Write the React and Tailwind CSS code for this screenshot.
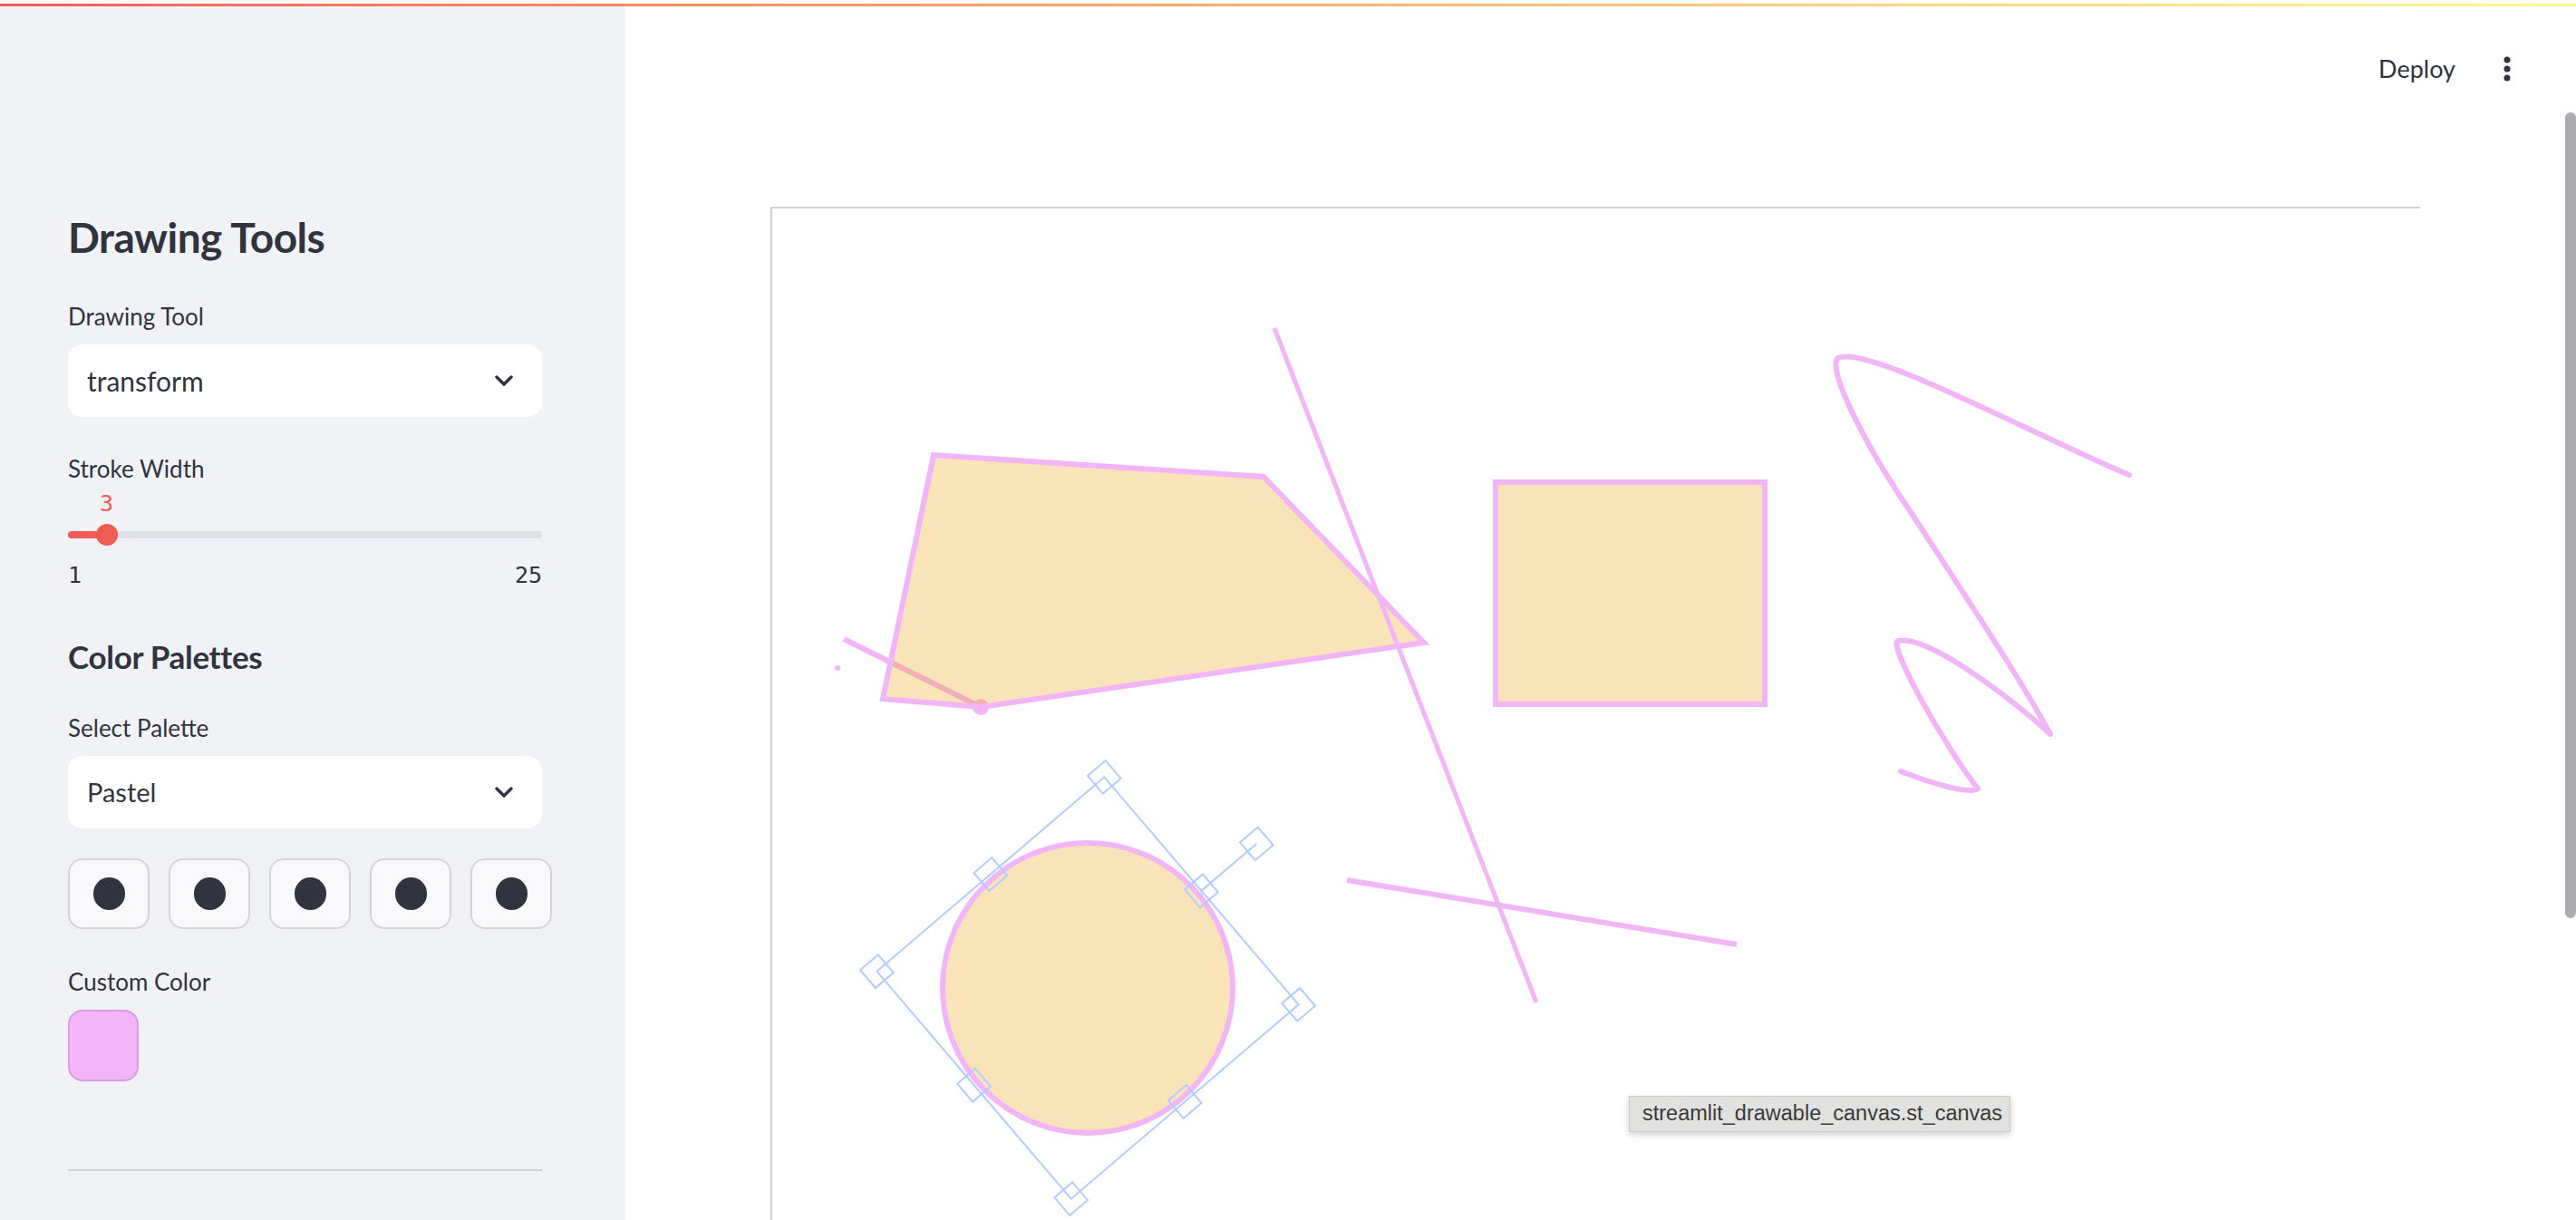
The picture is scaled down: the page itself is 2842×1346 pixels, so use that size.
import React from 'react'

const PINK = '#f2b5f8'
const FILL = 'rgba(235,165,25,0.3)'

function Chevron() {
  return (
    <svg width="20" height="13" viewBox="0 0 20 13" className="shrink-0">
      <path d="M2 2 L10 10 L18 2" fill="none" stroke="#31333f" strokeWidth="3.4" strokeLinecap="round" strokeLinejoin="round" />
    </svg>
  )
}

function Select({ value, textSize }) {
  return (
    <div className="flex h-[80px] w-[523px] items-center justify-between rounded-[16px] bg-white pl-[21px] pr-[32px]">
      <span className={textSize}>{value}</span>
      <Chevron />
    </div>
  )
}

function Label({ children, className = '' }) {
  return <div className={`h-[32px] text-[26px] leading-[32px] ${className}`}>{children}</div>
}

function Sidebar() {
  const swatches = [0, 1, 2, 3, 4]
  return (
    <aside className="flex w-[690px] shrink-0 flex-col bg-[#f0f2f6] pl-[75px] pt-[227px]">
      <h2 className="h-[56px] text-[46px] font-bold leading-[56px] tracking-[-0.5px]">Drawing Tools</h2>

      <Label className="mt-[43px]">Drawing Tool</Label>
      <div className="mt-[15px]">
        <Select value="transform" textSize="text-[30px]" />
      </div>

      <Label className="mt-[41px]">Stroke Width</Label>
      <div className="w-[523px] font-['DejaVu_Sans_Mono',monospace] text-[25px]">
        <div className="mt-[8px] h-[30px] pl-[35px] leading-[30px] text-[#ef5b55]">3</div>
        <div className="relative mt-[7px] flex h-[24px] items-center">
          <div className="flex h-[8px] w-full overflow-hidden rounded-full bg-[#dfe1e7]">
            <div className="h-full w-[43px] bg-[#ef5b55]" />
          </div>
          <div className="absolute left-[31px] top-0 h-[24px] w-[24px] rounded-full bg-[#ef5b55]" />
        </div>
        <div className="mt-[18px] flex h-[30px] justify-between leading-[30px]">
          <span>1</span>
          <span>25</span>
        </div>
      </div>

      <h3 className="mt-[52px] h-[44px] text-[35px] font-bold leading-[44px] tracking-[-0.3px]">Color Palettes</h3>

      <Label className="mt-[41px]">Select Palette</Label>
      <div className="mt-[15px]">
        <Select value="Pastel" textSize="text-[29px]" />
      </div>

      <div className="mt-[33px] flex gap-[21px]">
        {swatches.map((i) => (
          <button
            key={i}
            className="flex h-[78px] w-[90px] items-center justify-center rounded-[16px] border-2 border-[#d4d5da] bg-[#f9f9fb]"
          >
            <span className="h-[36px] w-[35px] rounded-full bg-[#31333f]" />
          </button>
        ))}
      </div>

      <Label className="mt-[42px]">Custom Color</Label>
      <div className="mt-[15px] h-[79px] w-[78px] rounded-[16px] border-2 border-[#d99ce2] bg-[#f2b6f8]" />

      <div className="mt-[97px] h-[2px] w-[523px] bg-[#d0d1d6]" />
    </aside>
  )
}

function Handle({ x, y }) {
  return <rect x={x - 13} y={y - 13} width="26" height="26" fill="none" stroke="rgb(178,204,255)" strokeWidth="2" />
}

function Drawing() {
  const handles = [
    [1035, 925], [1200, 925], [1365, 925],
    [1035, 1090], [1365, 1090],
    [1035, 1255], [1200, 1255], [1365, 1255],
    [1200, 845],
  ]
  return (
    <svg width="1818" height="1116" viewBox="852 230 1818 1116" className="block">
      {/* stray stroke + dots under the polygon */}
      <line x1="931" y1="705" x2="1082" y2="780" stroke={PINK} strokeWidth="6" />
      <circle cx="924" cy="737" r="3" fill={PINK} />
      <circle cx="1082" cy="780" r="9" fill={PINK} />

      <polygon points="1030,502 1394,526 1571,709 1082,780 974,771" fill={FILL} stroke={PINK} strokeWidth="6" />

      <line x1="1406" y1="362" x2="1695" y2="1106" stroke={PINK} strokeWidth="5" />

      <rect x="1650" y="532" width="297" height="245" fill={FILL} stroke={PINK} strokeWidth="6" />

      <path
        d="M2349,524 C2240,478 2060,380 2028,395 C2015,402 2050,480 2110,568 C2160,645 2230,750 2262,810 C2230,780 2130,700 2094,707 C2082,712 2150,830 2182,870 C2172,878 2120,860 2097,851"
        fill="none"
        stroke={PINK}
        strokeWidth="6"
        strokeLinecap="round"
        strokeLinejoin="round"
      />

      <line x1="1486" y1="971" x2="1916" y2="1042" stroke={PINK} strokeWidth="6" />

      <circle cx="1200" cy="1090" r="160" fill={FILL} stroke={PINK} strokeWidth="6" />

      {/* fabric-style selection box */}
      <g transform="rotate(49.5 1200 1090)">
        <rect x="1035" y="925" width="330" height="330" fill="none" stroke="rgb(178,204,255)" strokeWidth="2" />
        <line x1="1200" y1="925" x2="1200" y2="845" stroke="rgb(178,204,255)" strokeWidth="2" />
        {handles.map(([x, y]) => (
          <Handle key={`${x}-${y}`} x={x} y={y} />
        ))}
      </g>
    </svg>
  )
}

function Main() {
  return (
    <main className="flex min-w-0 flex-1 flex-col">
      <header className="flex h-[138px] shrink-0 items-center justify-end pr-[72px]">
        <span className="text-[27px]">Deploy</span>
        <svg width="8" height="28" viewBox="0 0 8 28" className="ml-[53px]">
          <circle cx="4" cy="4" r="3.5" fill="#31333f" />
          <circle cx="4" cy="14" r="3.5" fill="#31333f" />
          <circle cx="4" cy="24" r="3.5" fill="#31333f" />
        </svg>
      </header>
      <div className="relative ml-[160px] mt-[83px] w-[1820px] flex-1 overflow-hidden border-l-2 border-t-2 border-[#d0d0d0]">
        <Drawing />
        <div className="absolute left-[945px] top-[979px] flex h-[40px] w-[421px] items-center border border-[#cacaca] bg-[#e1e1df] pl-[14px] font-['Liberation_Sans',Arial,sans-serif] text-[23.5px] text-[#3a3a3a] shadow-[0_3px_8px_rgba(0,0,0,0.18)]">
          streamlit_drawable_canvas.st_canvas
        </div>
      </div>
    </main>
  )
}

export default function App() {
  return (
    <div className="relative flex h-[1346px] w-[2842px] flex-col overflow-hidden bg-white font-['Lato','Noto_Sans',sans-serif] text-[#31333f]">
      <div className="h-[4px] shrink-0 bg-white" />
      <div className="h-[3px] shrink-0 bg-linear-to-r from-[#ef5f58] to-[#fdfb8c]" />
      <div className="flex min-h-0 flex-1">
        <Sidebar />
        <Main />
      </div>
      <div className="absolute right-0 top-[124px] h-[889px] w-[12px] rounded-full bg-[#acabb0]" />
    </div>
  )
}
